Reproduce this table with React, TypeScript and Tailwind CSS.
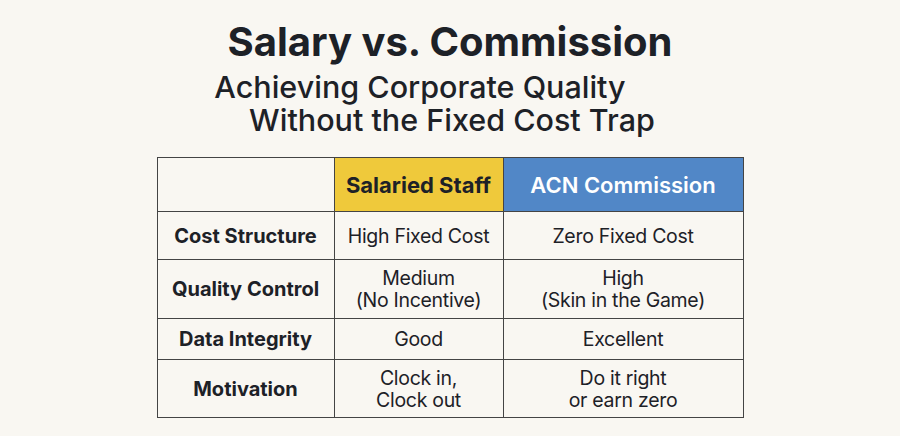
import React from "react";

const rows = [
  { label: "Cost Structure", staff: ["High Fixed Cost"], acn: ["Zero Fixed Cost"], h: "h-[48px]" },
  { label: "Quality Control", staff: ["Medium", "(No Incentive)"], acn: ["High", "(Skin in the Game)"], h: "h-[59px]" },
  { label: "Data Integrity", staff: ["Good"], acn: ["Excellent"], h: "h-[41px]" },
  { label: "Motivation", staff: ["Clock in,", "Clock out"], acn: ["Do it right", "or earn zero"], h: "h-[58px]" },
];

export default function App() {
  return (
    <div className="flex h-[436px] w-[900px] flex-col items-center bg-[#f9f7f2] font-['Inter','Liberation_Sans',sans-serif] text-[#1d2127]">
      <h1 className="mt-[22px] text-[40px] font-bold leading-[40px]">Salary vs. Commission</h1>
      <div className="mt-[8px] flex flex-col items-center text-[30.5px] font-medium leading-[33px]">
        <span className="mr-[60px]">Achieving Corporate Quality</span>
        <span className="ml-[4px]">Without the Fixed Cost Trap</span>
      </div>
      <table className="mt-[21px] w-[586px] table-fixed border-collapse border-[1.5px] border-[#444] text-center text-[19.5px] leading-[22px] tracking-[-0.3px]">
        <colgroup>
          <col className="w-[177px]" />
          <col className="w-[169px]" />
          <col className="w-[240px]" />
        </colgroup>
        <thead>
          <tr className="h-[54px]">
            <th className="border-[1.5px] border-[#444]"></th>
            <th className="border-[1.5px] border-[#444] bg-[#efc93b] text-[22px] font-bold tracking-normal">Salaried Staff</th>
            <th className="border-[1.5px] border-[#444] bg-[#5187c7] text-[22px] font-semibold tracking-normal text-white">ACN Commission</th>
          </tr>
        </thead>
        <tbody>
          {rows.map((r) => (
            <tr key={r.label} className={r.h}>
              <td className="border-[1.5px] border-[#444] text-[20px] font-bold tracking-normal">{r.label}</td>
              <td className="border-[1.5px] border-[#444]">
                {r.staff.map((t) => (
                  <div key={t}>{t}</div>
                ))}
              </td>
              <td className="border-[1.5px] border-[#444]">
                {r.acn.map((t) => (
                  <div key={t}>{t}</div>
                ))}
              </td>
            </tr>
          ))}
        </tbody>
      </table>
    </div>
  );
}
